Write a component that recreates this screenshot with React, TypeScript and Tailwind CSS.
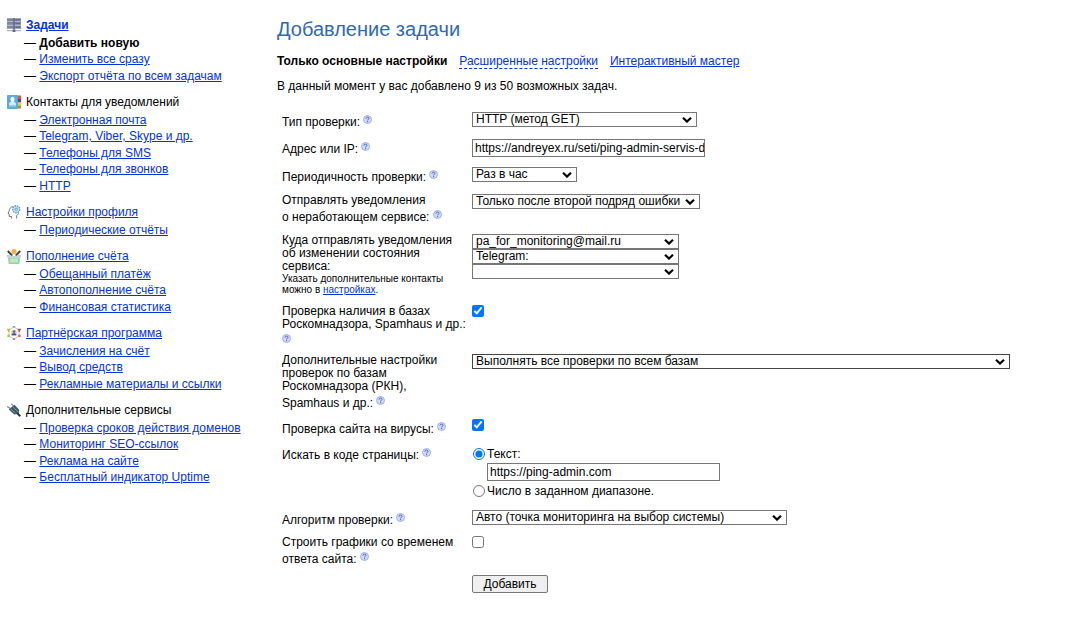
import type { ComponentProps, ReactNode } from "react";

type Item = { label: string; current?: boolean };
type Section = {
  title: string;
  icon: ReactNode;
  link?: boolean;
  bold?: boolean;
  items: Item[];
};

const linkClass = "text-[#0433dd] underline";
const inputClass =
  "block h-[18px] w-[233px] max-w-full border border-[#767676] bg-white pl-0.5 text-black";

function ServerIcon() {
  return (
    <svg viewBox="0 0 14 14" className="size-3.5 shrink-0" aria-hidden>
      <path d="M0 0h14v11H0z" fill="#c3c6d6" />
      <path d="M0 .4h14v2.8H0zM0 4h14v2.8H0zM0 7.8h14v2.8H0z" fill="#7f84a0" />
      <path d="M8.5 1.2H13v1H8.5zM8.5 4.9H13v1H8.5zM8.5 8.7H13v1H8.5z" fill="#626783" />
      <path d="M6.4 0h1.2v14H6.4z" fill="#5a5f7b" />
      <path d="M0 12.2h14v1H0z" fill="#9ba0b6" />
      <path d="M5.6 11.6h2.8V14H5.6z" fill="#646985" />
    </svg>
  );
}

function ContactsIcon() {
  return (
    <svg viewBox="0 0 14 14" className="size-3.5 shrink-0" aria-hidden>
      <path d="M10 .5h4V4h-4z" fill="#ef4a4f" />
      <path d="M10 4h4v3h-4z" fill="#1559b0" />
      <path d="M10 7h4v3.5h-4z" fill="#fbc62d" />
      <path d="M10 10.5h4v3h-4z" fill="#b98c14" />
      <rect width="11" height="14" rx="1" fill="#55addd" />
      <path d="M3.6 3.8c0-1.3.8-2 1.9-2s1.9.7 1.9 2v1.6c0 .8-.8 1.5-1.9 1.5s-1.9-.7-1.9-1.5z" fill="#fff" />
      <path d="M2 10.6V9c0-1.6 1.6-2.2 3.5-2.2S9 7.4 9 9v1.6z" fill="#d4edfa" />
      <path d="M2 11.6h7" stroke="#8fcbea" strokeWidth=".8" />
    </svg>
  );
}

function ProfileIcon() {
  return (
    <svg viewBox="0 0 14 14" className="size-3.5 shrink-0" fill="none" aria-hidden>
      <path
        d="M6 1.6C3.6 2 2.2 3.8 2.2 6L1 8.4l1.2.5v2.6h2.4v2M9.6 13.5v-3c1.2-.8 1.8-1.6 2-2.6"
        stroke="#6b6b6b"
        strokeWidth=".9"
      />
      <circle cx="9.2" cy="4.3" r="3.4" stroke="#5d9dc4" strokeWidth="1.6" strokeDasharray="1.6 .7" />
      <circle cx="9.2" cy="4.3" r="2.5" fill="#b7dbee" />
      <circle cx="9.2" cy="4.3" r="1.1" fill="#fff" stroke="#3c84b2" strokeWidth=".7" />
    </svg>
  );
}

function BasketIcon() {
  return (
    <svg viewBox="0 0 14 15" className="h-[15px] w-3.5 shrink-0" aria-hidden>
      <circle cx="7" cy="2.6" r="2.6" fill="#f6b044" />
      <path d="M.8 2l4.4 4.6M13.2 2L8.8 6.6" stroke="#35445a" strokeWidth="2" />
      <path d="M0 6h3.5l1.5 1h4l1.500-1H14v2.5H0z" fill="#c0d3d6" />
      <path d="M1 8.5h12L12.4 15H1.6z" fill="#9bd1a5" />
      <path d="M4 9.5v4M6 9.5v4M8 9.5v4M10 9.5v4" stroke="#eef9f0" strokeWidth="1" />
    </svg>
  );
}

function PartnersIcon() {
  return (
    <svg viewBox="0 0 14 14" className="size-3.5 shrink-0" aria-hidden>
      <path d="M7 1l5 3v6l-5 3-5-3V4z" fill="none" stroke="#b7bcc6" strokeWidth=".8" />
      <circle cx="7" cy="7" r="3.3" fill="#d5dbe8" />
      <circle cx="7" cy="5.6" r="1.4" fill="#6f6a72" />
      <path d="M4.4 9.3c.2-1.5 1.2-2.1 2.6-2.1s2.4.6 2.6 2.1z" fill="#3e527f" />
      <path d="M5.8 0h2.4v1.6H5.8z" fill="#69b0e0" />
      <path d="M5.8 12.4h2.4V14H5.8z" fill="#8b8f96" />
      <path d="M0 2.8h3.4v1.4H2.4V6H1V4.2H0z" fill="#f5a623" />
      <path d="M10.6 2.8H14v1.4h-1V6h-1.4V4.2h-1z" fill="#b5533c" />
      <path d="M.4 8.6h2.4v2.6H.4z" fill="#93d83e" />
      <circle cx="12.4" cy="9.9" r="1.4" fill="#f2604f" />
    </svg>
  );
}

function PlugIcon() {
  return (
    <svg viewBox="0 0 14 14" className="size-3.5 shrink-0" aria-hidden>
      <path d="M0 3.6l3.6 2M4.4.6l2.2 3" stroke="#8b969b" strokeWidth="1.3" />
      <path d="M1.8 6.4L7.4 1.8l4.8 5-.8 4-4.200.6z" fill="#3d5c6b" />
      <path d="M3.8 6l4.6 4.4M6 4.2l4.8 4.6" stroke="#86a3b0" strokeWidth=".8" />
      <path d="M10.2 10l3 3.200" stroke="#27353c" strokeWidth="2" />
    </svg>
  );
}

const sections: Section[] = [
  {
    title: "Задачи",
    icon: <ServerIcon />,
    link: true,
    bold: true,
    items: [
      { label: "Добавить новую", current: true },
      { label: "Изменить все сразу" },
      { label: "Экспорт отчёта по всем задачам" },
    ],
  },
  {
    title: "Контакты для уведомлений",
    icon: <ContactsIcon />,
    items: [
      { label: "Электронная почта" },
      { label: "Telegram, Viber, Skype и др." },
      { label: "Телефоны для SMS" },
      { label: "Телефоны для звонков" },
      { label: "HTTP" },
    ],
  },
  {
    title: "Настройки профиля",
    icon: <ProfileIcon />,
    link: true,
    items: [{ label: "Периодические отчёты" }],
  },
  {
    title: "Пополнение счёта",
    icon: <BasketIcon />,
    link: true,
    items: [
      { label: "Обещанный платёж" },
      { label: "Автопополнение счёта" },
      { label: "Финансовая статистика" },
    ],
  },
  {
    title: "Партнёрская программа",
    icon: <PartnersIcon />,
    link: true,
    items: [
      { label: "Зачисления на счёт" },
      { label: "Вывод средств" },
      { label: "Рекламные материалы и ссылки" },
    ],
  },
  {
    title: "Дополнительные сервисы",
    icon: <PlugIcon />,
    items: [
      { label: "Проверка сроков действия доменов" },
      { label: "Мониторинг SEO-ссылок" },
      { label: "Реклама на сайте" },
      { label: "Бесплатный индикатор Uptime" },
    ],
  },
];

function Sidebar() {
  return (
    <nav className="flex w-[277px] shrink-0 flex-col gap-2 pt-[15px] pl-[7px]">
      {sections.map((section) => (
        <section key={section.title}>
          <h2 className={`flex h-5 items-center gap-[5px] ${section.bold ? "font-bold" : ""}`}>
            {section.icon}
            {section.link ? (
              <a href="#" className={linkClass}>
                {section.title}
              </a>
            ) : (
              section.title
            )}
          </h2>
          <ul className="pl-[17px]">
            {section.items.map((item) => (
              <li key={item.label} className="leading-4 even:leading-[17px]">
                —{" "}
                {item.current ? (
                  <b>{item.label}</b>
                ) : (
                  <a href="#" className={linkClass}>
                    {item.label}
                  </a>
                )}
              </li>
            ))}
          </ul>
        </section>
      ))}
    </nav>
  );
}

function Help() {
  return (
    <svg viewBox="0 0 9 9" className="mt-[3px] inline-block size-[9px] align-[2px]" aria-hidden>
      <circle cx="4.5" cy="4.5" r="4" fill="#d0daf9" stroke="#9aace9" strokeWidth=".9" />
      <path
        d="M3 3.6c0-1 .7-1.5 1.5-1.5s1.5.5 1.5 1.3c0 .9-1.4.9-1.4 2M4.6 6.1v1.1"
        fill="none"
        stroke="#4a5bbd"
        strokeWidth="1"
      />
    </svg>
  );
}

// The native arrow is replaced so that the text fits a 15px high box
function Select({ className, ...props }: ComponentProps<"select">) {
  return (
    <div className={`relative max-w-full ${className ?? ""}`}>
      <select
        {...props}
        className="block h-[15px] w-full appearance-none border border-inherit bg-white pr-4 pl-[3px] leading-[13px] text-black"
      />
      <svg
        viewBox="0 0 10 6"
        className="pointer-events-none absolute top-[5px] right-[5px] h-1.5 w-2.5"
        fill="none"
        aria-hidden
      >
        <path d="M1 .8l4 3.8 4-3.8" stroke="#000" strokeWidth="2.2" />
      </svg>
    </div>
  );
}

type RowProps = { label: ReactNode; htmlFor?: string; note?: ReactNode; children: ReactNode };

function Row({ label, htmlFor, note, children }: RowProps) {
  return (
    <div className="grid grid-cols-[186px_1fr] gap-x-1">
      <div>
        {htmlFor ? (
          <label htmlFor={htmlFor} className="block">
            {label}
          </label>
        ) : (
          label
        )}
        {note}
      </div>
      <div className="min-w-0">{children}</div>
    </div>
  );
}

export default function App() {
  return (
    <div className="flex bg-white font-['Liberation_Sans',Arial,sans-serif] text-xs text-black">
      <Sidebar />
      <main className="min-w-0 flex-1 pt-4 pr-[60px] pb-6">
        <h1 className="text-xl leading-[26px] text-[#3069b3]">Добавление задачи</h1>
        <div className="mt-3 flex gap-3 leading-[14px]">
          <b>Только основные настройки</b>
          <a href="#" className="border-b border-dashed border-[#0433dd] text-[#0433dd]">
            Расширенные настройки
          </a>
          <a href="#" className={linkClass}>
            Интерактивный мастер
          </a>
        </div>
        <p className="mt-2.5 leading-[14px]">
          В данный момент у вас добавлено 9 из 50 возможных задач.
        </p>

        <form
          className="mt-[19px] flex flex-col gap-1.5 pl-[5px] leading-[13px]"
          onSubmit={(e) => e.preventDefault()}
        >
          <div className="flex flex-col gap-2.5">
            <Row htmlFor="type" label={<>Тип проверки: <Help /></>}>
              <Select id="type" className="w-[225px] border-[#767676]">
                <option>HTTP (метод GET)</option>
              </Select>
            </Row>
            <Row htmlFor="address" label={<>Адрес или IP: <Help /></>}>
              <input
                id="address"
                type="text"
                defaultValue="https://andreyex.ru/seti/ping-admin-servis-d"
                className={inputClass}
              />
            </Row>
            <Row htmlFor="period" label={<>Периодичность проверки: <Help /></>}>
              <Select id="period" className="w-[105px] border-[#767676]">
                <option>Раз в час</option>
              </Select>
            </Row>
            <Row
              htmlFor="notify"
              label={<>Отправлять уведомления о&nbsp;неработающем&nbsp;сервисе: <Help /></>}
            >
              <Select id="notify" className="w-[228px] border-[#767676]">
                <option>Только после второй подряд ошибки</option>
              </Select>
            </Row>
            <Row
              htmlFor="contact"
              label="Куда отправлять уведомления об изменении состояния сервиса:"
              note={
                <p className="text-[10px] leading-[11px]">
                  Указать дополнительные контакты
                  <br />
                  можно в{" "}
                  <a href="#" className={linkClass}>
                    настройках
                  </a>
                  .
                </p>
              }
            >
              <Select id="contact" className="w-[207px] border-[#767676]">
                <option>pa_for_monitoring@mail.ru</option>
              </Select>
              <Select aria-label="Telegram" className="w-[207px] border-[#767676]">
                <option>Telegram:</option>
              </Select>
              <Select aria-label="Контакт" className="w-[207px] border-[#767676]">
                <option></option>
              </Select>
            </Row>
            <Row
              htmlFor="bases"
              label={<>Проверка наличия в базах Роскомнадзора, Spamhaus и&nbsp;др.: <Help /></>}
            >
              <input id="bases" type="checkbox" defaultChecked className="block size-3" />
            </Row>
          </div>

          <div className="flex flex-col gap-[9px]">
            <Row
              htmlFor="bases-mode"
              label={
                <>
                  Дополнительные настройки проверок по базам Роскомнадзора (РКН),
                  <br />
                  Spamhaus и др.: <Help />
                </>
              }
            >
              <Select id="bases-mode" className="w-[538px] border-[#444444]">
                <option>Выполнять все проверки по всем базам</option>
              </Select>
            </Row>
            <Row htmlFor="virus" label={<>Проверка сайта на вирусы: <Help /></>}>
              <input id="virus" type="checkbox" defaultChecked className="block size-3" />
            </Row>
            <Row label={<>Искать в коде страницы: <Help /></>}>
              <label className="flex h-[18px] items-center gap-0.5 pl-px">
                <input type="radio" name="search" defaultChecked className="size-3" />
                Текст:
              </label>
              <div className="pl-[15px]">
                <input
                  type="text"
                  aria-label="Текст"
                  defaultValue="https://ping-admin.com"
                  className={inputClass}
                />
              </div>
              <label className="flex h-5 items-center gap-0.5 pl-px">
                <input type="radio" name="search" className="size-3" />
                Число в заданном диапазоне.
              </label>
            </Row>
            <Row htmlFor="algorithm" label={<>Алгоритм проверки: <Help /></>}>
              <Select id="algorithm" className="w-[315px] border-[#767676]">
                <option>Авто (точка мониторинга на выбор системы)</option>
              </Select>
            </Row>
            <Row
              htmlFor="charts"
              label={<>Строить графики со временем ответа сайта: <Help /></>}
            >
              <input id="charts" type="checkbox" className="block size-3" />
            </Row>
            <Row label="">
              <button
                type="submit"
                className="block h-[18px] w-[76px] rounded-xs border border-[#767676] bg-[#efefef]"
              >
                Добавить
              </button>
            </Row>
          </div>
        </form>
      </main>
    </div>
  );
}
